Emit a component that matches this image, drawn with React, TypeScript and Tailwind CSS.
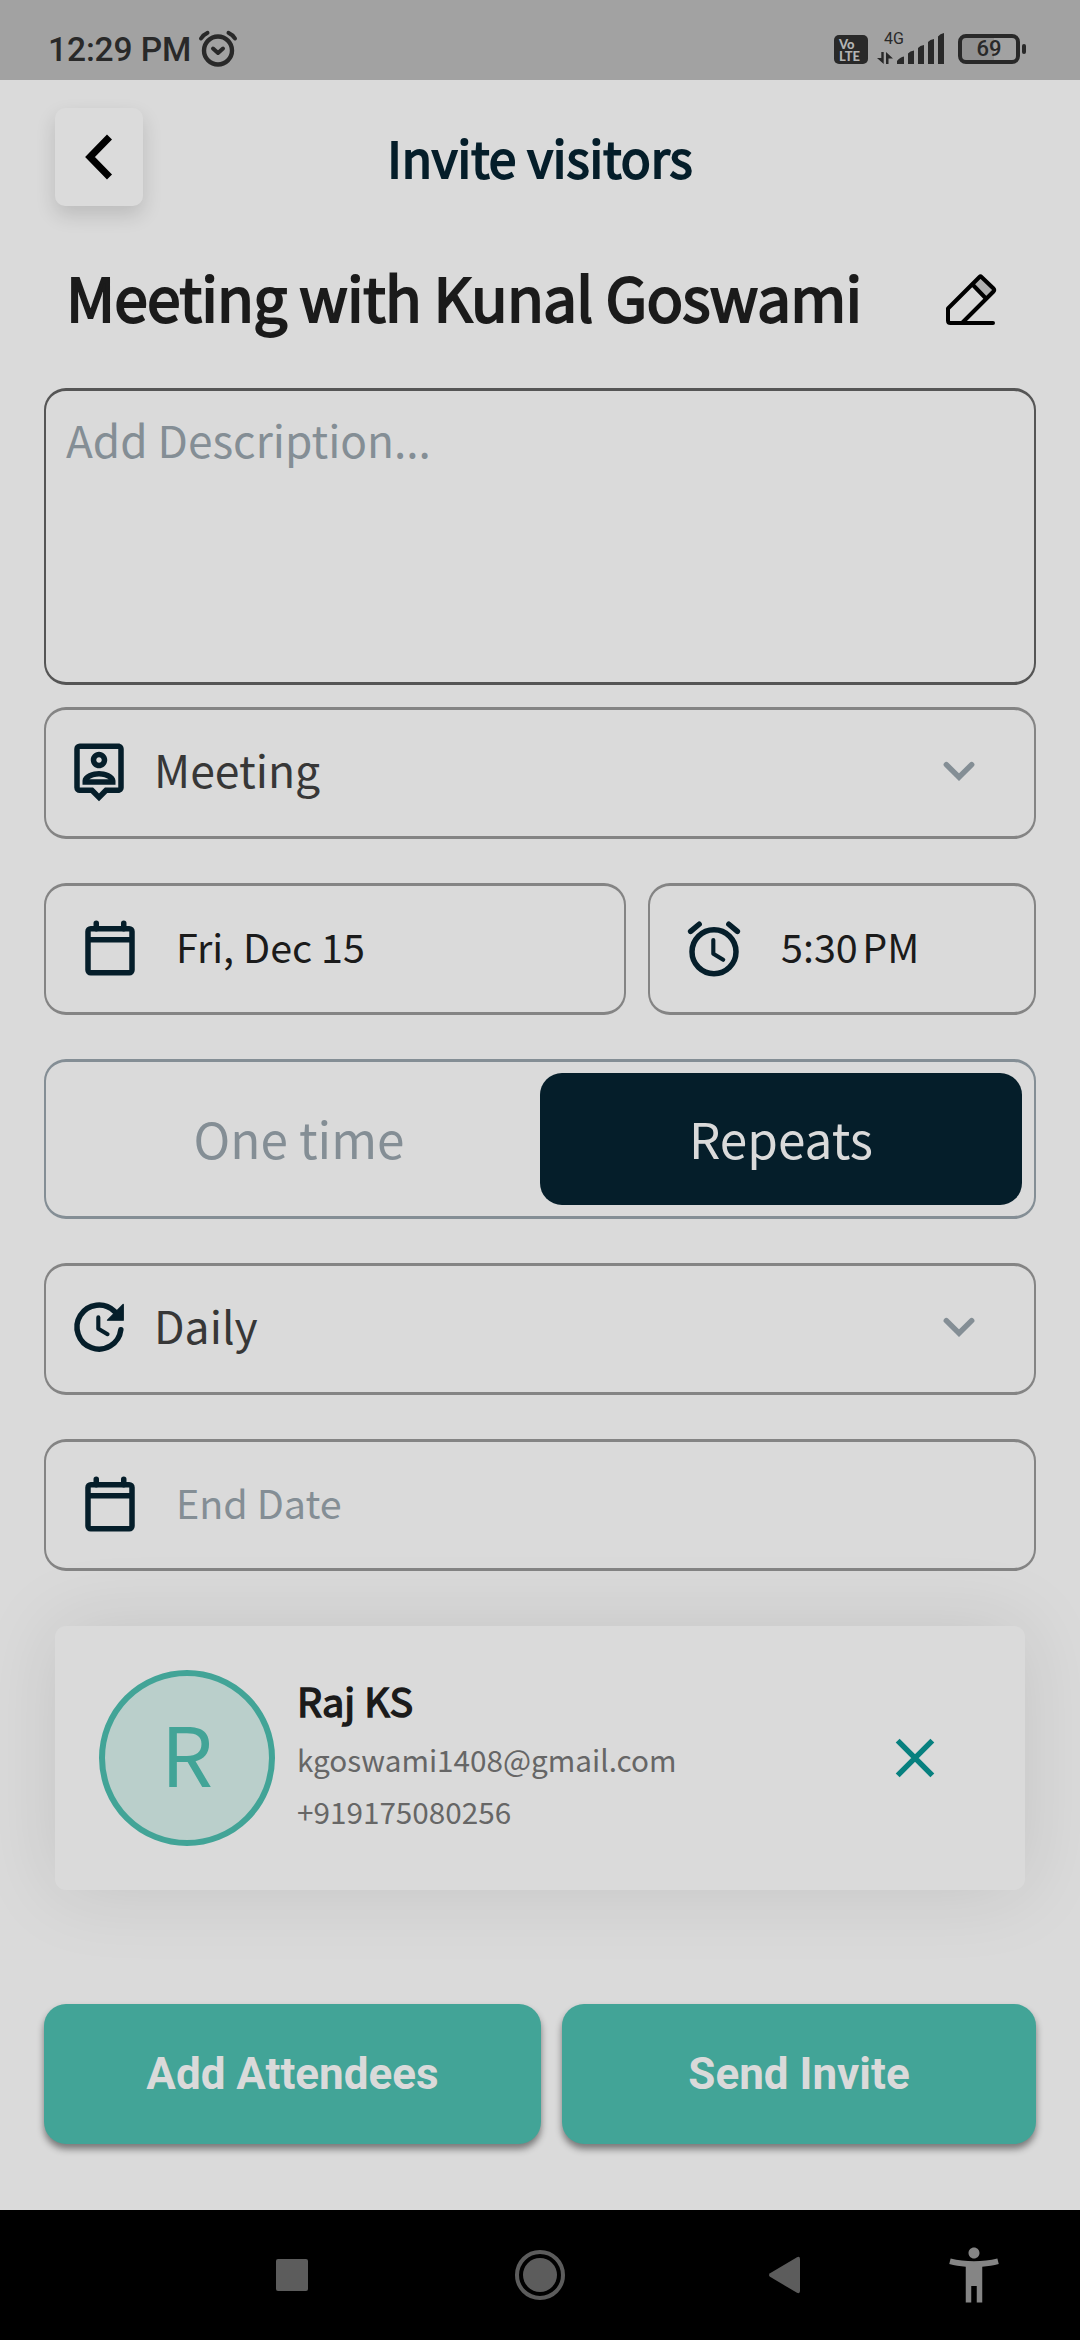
import type { ReactNode } from "react";
import { MdAccessibilityNew, MdOutlinePersonPin } from "react-icons/md";

function AlarmStatusIcon() {
  return (
    <svg width="40" height="38" viewBox="0 0 40 38" fill="none" stroke="#292929" strokeLinecap="round" strokeLinejoin="round">
      <circle cx="20" cy="20.5" r="14" strokeWidth="4.4" />
      <path d="M3 8.5Q5.500 4.500 9.500 2.800M30.500 2.800Q34.500 4.500 37 8.500" strokeWidth="4" />
      <path d="M15 18.500l5 4.500 5-4.500" strokeWidth="4" />
    </svg>
  );
}

function SignalIcon() {
  return (
    <svg width="68" height="34" viewBox="0 0 68 34" fill="#292929">
      <path d="M4.300 20h2.400v12L0 26h4.300zM9 32V20l7 6.500h-4.500V32z" />
      <path d="M20 32V29q3-4 7-4.500V32zM31 32V21.500q2-2.500 6-3V32zM41 32V16q2-2.500 6-3V32zM51 32V10q2-2.500 6-3V32zM61 32V4.500q2-3 6-3.500V32z" />
    </svg>
  );
}

function StatusBar() {
  return (
    <header className="flex h-[80px] shrink-0 items-center bg-[#a2a2a2] pt-[20px] pr-[54px] pl-[48px] font-[Roboto,sans-serif] text-[#292929]">
      <span className="text-[33.5px] leading-none font-medium tracking-[-0.1px]">12:29 PM</span>
      <span className="-mt-[2px] ml-[7px]">
        <AlarmStatusIcon />
      </span>
      <div className="-mt-[4px] ml-auto flex h-[36px] items-end">
        <div className="mb-[2px] flex h-[29px] w-[34px] flex-col justify-center rounded-[5px] bg-[#292929] pl-[5px] font-[Lato,sans-serif] text-[13px] leading-[12px] font-black text-[#b4b4b4]">
          <span>Vo</span>
          <span>LTE</span>
        </div>
        <div className="relative ml-[9px] h-[36px] w-[68px]">
          <span className="absolute top-[1px] left-[7px] text-[16px] leading-none">4G</span>
          <div className="absolute bottom-0 left-0">
            <SignalIcon />
          </div>
        </div>
        <div className="mb-[2px] ml-[13px] flex h-[30px] w-[62px] items-center justify-center rounded-[8px] border-4 border-[#292929] bg-linear-to-r from-[#919191] from-60% to-[#a2a2a2] to-60% text-[22px] leading-none font-medium">
          69
        </div>
        <div className="mb-[12px] ml-[2px] h-[10px] w-[4px] rounded-[2px] bg-[#292929]" />
      </div>
    </header>
  );
}

function CalendarIcon() {
  return (
    <svg className="mb-[2px]" width="66" height="66" viewBox="0 0 24 24" fill="none" stroke="#051e2a">
      <rect x="4" y="5" width="16" height="16" rx="1" strokeWidth="2" />
      <path d="M4 9h16" strokeWidth="2" />
      <path d="M7 3v2M17 3v2" strokeWidth="2" strokeLinecap="round" />
    </svg>
  );
}

function AlarmIcon() {
  return (
    <svg width="66" height="66" viewBox="0 0 24 24" fill="none" stroke="#051e2a" strokeLinecap="round" strokeLinejoin="round">
      <circle cx="12" cy="13" r="8" strokeWidth="2" />
      <path d="M3.500 5.600l3.100-2.600M17.400 3l3.100 2.600" strokeWidth="2" />
      <path d="M11.750 8.750v5l3.600 2.150" strokeWidth="1.500" />
    </svg>
  );
}

function UpdateIcon() {
  return (
    <svg width="66" height="66" viewBox="0 0 24 24" fill="none" stroke="#051e2a" strokeLinecap="round" strokeLinejoin="round">
      <path d="M19.940 13A8 8 0 1 1 17.600 6.300" strokeWidth="2" />
      <path d="M20.800 3.800v5.700h-5.700z" fill="#051e2a" strokeWidth=".5" />
      <path d="M11.750 8.500v4.100l3.350 2" strokeWidth="1.500" />
    </svg>
  );
}

function ChevronDown() {
  return (
    <svg width="66" height="66" viewBox="0 0 24 24" fill="none" stroke="#848e95" strokeWidth="2" strokeLinecap="round">
      <path d="M7.400 9.300l4.600 4.600 4.600-4.600" />
    </svg>
  );
}

function EditIcon() {
  return (
    <svg width="54" height="54" viewBox="0 0 54 54" fill="none" stroke="#000" strokeWidth="4" strokeLinecap="round" strokeLinejoin="round">
      <path d="M29 12l7-8.500 13.500 13-7.500 8z" fill="#afafaf" stroke="none" />
      <path d="M4 35.500V47.500Q4 50 6.500 50H18L49.500 18.500Q51 17 49.500 15.500L37.500 4Q36.500 3 35.500 4z" />
      <path d="M28.500 11.500L41.500 25M18 50h31" />
    </svg>
  );
}

function Field({ className = "", children }: { className?: string; children: ReactNode }) {
  return (
    <div className={`flex h-[132px] items-center rounded-[22px] border-x-2 border-y-3 border-[#848484] ${className}`}>
      {children}
    </div>
  );
}

function SelectField({ icon, label }: { icon: ReactNode; label: string }) {
  return (
    <Field className="pr-[42px] pl-[20px]">
      <span className="mb-[5px]">{icon}</span>
      <span className="ml-[22px] pb-[7px] text-[44.5px] leading-none text-[#373737]">{label}</span>
      <span className="-mt-[2px] ml-auto">
        <ChevronDown />
      </span>
    </Field>
  );
}

export default function App() {
  return (
    <div className="flex h-[2340px] w-[1080px] flex-col overflow-hidden bg-[#dadada] font-['Noto_Sans_CJK_SC',sans-serif]">
      <StatusBar />

      <main className="flex grow flex-col px-[44px] pt-[28px]">
        <div className="flex h-[98px] items-center">
          <button className="ml-[11px] flex h-[98px] w-[88px] items-center justify-center rounded-[10px] bg-[#dbdbdb] shadow-[0_9px_20px_rgba(0,0,0,0.14)]">
            <svg width="28" height="46" viewBox="0 0 28 46" fill="none" stroke="#000" strokeWidth="7">
              <path d="M24.500 3L5 23l19.500 20" />
            </svg>
          </button>
          <h1 className="grow pr-[99px] text-center text-[49.5px] leading-none tracking-[-0.1px] text-[#051e2a] [-webkit-text-stroke:1.9px]">
            Invite visitors
          </h1>
        </div>

        <div className="mt-[62px] flex h-[64px] items-center justify-between pr-[38px] pl-[22px]">
          <h2 className="pb-[7px] text-[60.5px] leading-none tracking-[-0.78px] whitespace-nowrap text-[#1b1b1b] [-webkit-text-stroke:2px]">
            Meeting with Kunal Goswami
          </h2>
          <EditIcon />
        </div>

        <div className="mt-[56px] h-[297px] rounded-[22px] border-x-2 border-y-3 border-[#555] px-[20px] pt-[26px] text-[44.2px] leading-none text-[#848e95]">
          Add Description...
        </div>

        <div className="mt-[22px] flex flex-col gap-[44px]">
          <SelectField icon={<MdOutlinePersonPin size={66} color="#051e2a" />} label="Meeting" />

          <div className="flex gap-[22px]">
            <Field className="w-[582px] pl-[31px]">
              <CalendarIcon />
              <span className="ml-[33px] pb-[6px] text-[39.5px] leading-none text-[#1b1b1b]">Fri, Dec 15</span>
            </Field>
            <Field className="grow pl-[31px]">
              <AlarmIcon />
              <span className="ml-[34px] pb-[6px] text-[39.5px] leading-none text-[#1b1b1b]">5:30{"\u202f"}PM</span>
            </Field>
          </div>

          <div className="flex h-[160px] rounded-[22px] border-x-2 border-y-3 border-[#848e95] px-[12px] py-[11px] text-[49.5px] leading-none">
            <div className="flex flex-1 items-center justify-center pb-[2px] text-[#848e95]">One time</div>
            <div className="flex flex-1 items-center justify-center rounded-[22px] bg-[#051e2a] pb-[2px] text-[#dadada]">
              Repeats
            </div>
          </div>

          <SelectField icon={<UpdateIcon />} label="Daily" />

          <Field className="pl-[31px]">
            <CalendarIcon />
            <span className="ml-[33px] pb-[6px] text-[39.5px] leading-none text-[#848e95]">End Date</span>
          </Field>
        </div>

        <div className="mx-[11px] mt-[55px] flex h-[264px] items-center rounded-[11px] bg-[#dadada] pr-[77px] pl-[44px] shadow-[0_0_80px_rgba(0,0,0,0.1)]">
          <div className="flex size-[176px] shrink-0 items-center justify-center rounded-full border-[6px] border-[#42a497] bg-[#bacfcb] pb-[12px] text-[82px] leading-none text-[#42a497]">
            R
          </div>
          <div className="ml-[22px] flex flex-col pb-[9px] leading-none">
            <span className="text-[39.5px] tracking-[0.1px] text-[#1b1b1b] [-webkit-text-stroke:1.5px]">Raj KS</span>
            <span className="mt-[25px] text-[29.7px] text-[#666]">kgoswami1408@gmail.com</span>
            <span className="mt-[23px] text-[29.7px] text-[#666]">+919175080256</span>
          </div>
          <svg className="ml-auto" width="66" height="66" viewBox="0 0 24 24" fill="none" stroke="#07807f" strokeWidth="2">
            <path d="M5.700 5.700l12.600 12.600M18.300 5.700L5.700 18.300" />
          </svg>
        </div>

        <div className="mt-[114px] flex h-[140px] gap-[21px] font-[Roboto,sans-serif] text-[44px] leading-none font-bold text-[#dadada]">
          <button className="w-[497px] rounded-[22px] bg-[#42a497] shadow-[0_5px_7px_rgba(0,0,0,0.45)]">
            Add Attendees
          </button>
          <button className="grow rounded-[22px] bg-[#42a497] shadow-[0_5px_7px_rgba(0,0,0,0.45)]">
            Send Invite
          </button>
        </div>
      </main>

      <nav className="flex h-[130px] shrink-0 items-center bg-black pl-[276px] text-[#5c5c5c]">
        <div className="size-[32px] rounded-[2px] bg-current" />
        <div className="ml-[207px] flex size-[50px] items-center justify-center rounded-full border-4 border-current">
          <div className="size-[34px] rounded-full bg-current" />
        </div>
        <svg className="ml-[203px]" width="32" height="38" viewBox="0 0 32 38" fill="currentColor">
          <path d="M2 17.200L29 1.200Q32 0 32 3V35Q32 38 29 36.800L2 20.800Q0 19 2 17.200z" />
        </svg>
        <MdAccessibilityNew className="ml-[141px]" size={66} color="#858585" />
      </nav>
    </div>
  );
}
